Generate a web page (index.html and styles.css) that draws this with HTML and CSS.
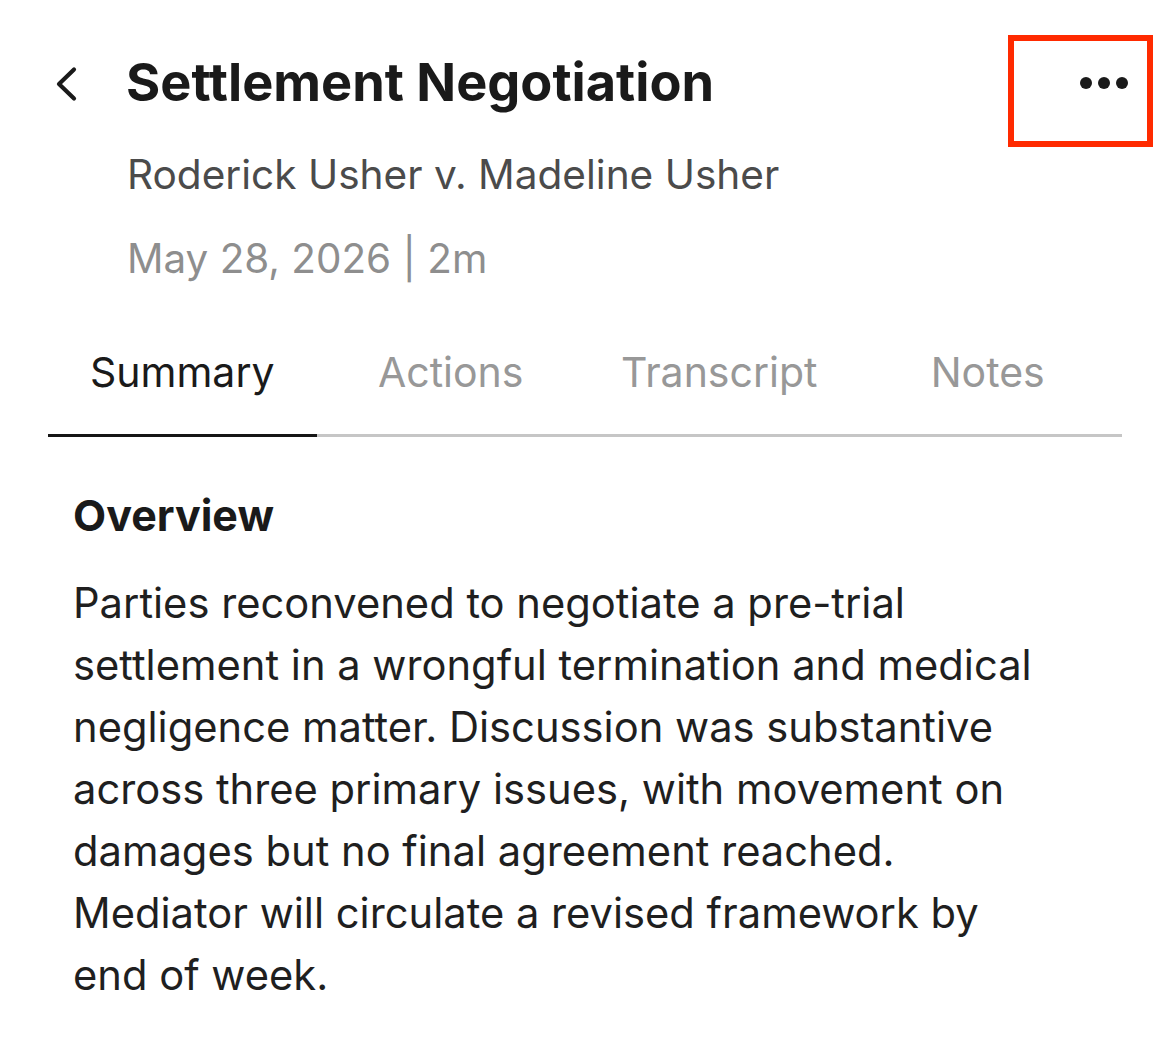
FILE: index.html
```html
<!DOCTYPE html>
<html lang="en">
<head>
<meta charset="utf-8">
<title>Settlement Negotiation</title>
<link rel="stylesheet" href="styles.css">
</head>
<body>
<div class="page">
  <header class="header">
    <button class="back" aria-label="Back">
      <svg width="24" height="36" viewBox="0 0 24 36"><path d="M19 3.5 L4 18 L19 32.5" fill="none" stroke="#1a1a1a" stroke-width="4.2" stroke-linecap="round" stroke-linejoin="round"/></svg>
    </button>
    <div class="title-block">
      <h1 class="title">Settlement Negotiation</h1>
      <p class="parties">Roderick Usher v. Madeline Usher</p>
      <p class="meta">May 28, 2026 | 2m</p>
    </div>
    <button class="more" aria-label="More">
      <svg width="48" height="12" viewBox="0 0 48 12"><circle cx="6" cy="6" r="6" fill="#1a1a1a"/><circle cx="24" cy="6" r="6" fill="#1a1a1a"/><circle cx="42" cy="6" r="6" fill="#1a1a1a"/></svg>
    </button>
    <div class="highlight"></div>
  </header>

  <nav class="tabs">
    <div class="tab active">Summary</div>
    <div class="tab">Actions</div>
    <div class="tab">Transcript</div>
    <div class="tab">Notes</div>
  </nav>

  <section class="content">
    <h2 class="section-title">Overview</h2>
    <p class="body-text">Parties reconvened to negotiate a pre-trial settlement in a wrongful termination and medical negligence matter. Discussion was substantive across three primary issues, with movement on damages but no final agreement reached. Mediator will circulate a revised framework by end of week.</p>
  </section>
</div>
</body>
</html>
```

FILE: styles.css
```css
* { box-sizing: border-box; }

html, body {
  margin: 0;
  padding: 0;
  background: #ffffff;
}

body {
  font-family: Inter, "Noto Sans", "Liberation Sans", sans-serif;
  color: #1a1a1a;
}

.page {
  position: relative;
  width: 1170px;
  min-height: 1039px;
}

.header {
  display: grid;
  grid-template-columns: auto 1fr auto;
  align-items: start;
  padding: 51px 42px 0 55px;
}

button {
  border: 0;
  background: none;
  padding: 0;
  margin: 0;
  cursor: pointer;
}

.back {
  display: block;
  margin-top: 14.5px;
  line-height: 0;
}

.back svg { display: block; }

.title-block {
  margin-left: 47px;
}

.title {
  margin: 0;
  font-size: 52.3px;
  line-height: 62px;
  font-weight: 700;
  color: #1a1a1a;
}

.parties {
  margin: 36px 0 0 1px;
  font-size: 40.6px;
  line-height: 52px;
  color: #4b4b4b;
}

.meta {
  margin: 32px 0 0 1px;
  font-size: 40.4px;
  line-height: 52px;
  color: #8e8e8e;
}

.more {
  display: block;
  margin-top: 26px;
  line-height: 0;
}

.more svg { display: block; }

.highlight {
  position: absolute;
  left: 1008px;
  top: 35px;
  width: 145px;
  height: 112px;
  border: 6px solid #ff2a00;
}

.tabs {
  display: grid;
  grid-template-columns: repeat(4, 1fr);
  margin: 62px 48px 0 48px;
  border-bottom: 3px solid #c6c6c6;
}

.tab {
  text-align: center;
  font-size: 41px;
  line-height: 50px;
  padding-bottom: 37px;
  color: #989898;
}

.tab.active {
  color: #1a1a1a;
  border-bottom: 3px solid #161616;
  margin-bottom: -3px;
}

.content {
  padding: 52px 125px 0 73px;
}

.section-title {
  margin: 0;
  font-size: 43px;
  line-height: 52px;
  font-weight: 700;
  color: #1a1a1a;
}

.body-text {
  margin: 31px 0 0 0;
  font-size: 41.7px;
  line-height: 62px;
  color: #1f1f1f;
}
```
